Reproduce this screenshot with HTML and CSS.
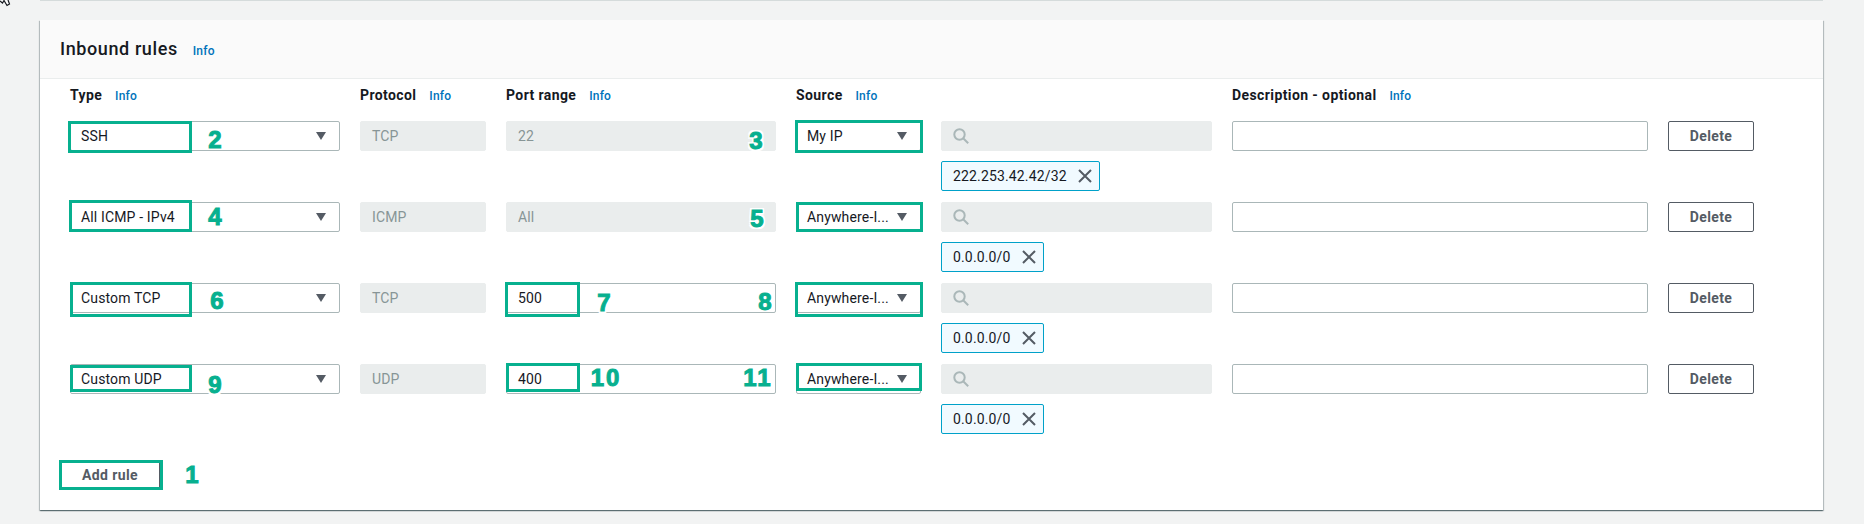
FILE: index.html
```html
<!DOCTYPE html>
<html lang="en">

<head>
    <meta charset="UTF-8">
    <title>Inbound rules</title>
    <link rel="stylesheet" href="styles.css">
</head>

<body>
    <div class="top-rule"></div>

    <section class="card">
        <header class="card-header">
            <h2>Inbound rules</h2>
            <a class="info info-title" href="#">Info</a>
        </header>

        <div class="rules">
            <div class="rule-row label-row">
                <div class="label">Type <a class="info" href="#">Info</a></div>
                <div class="label">Protocol <a class="info" href="#">Info</a></div>
                <div class="label">Port range <a class="info" href="#">Info</a></div>
                <div class="label label-wide">Source <a class="info" href="#">Info</a></div>
                <div></div>
                <div class="label">Description - optional <a class="info" href="#">Info</a></div>
                <div></div>
            </div>

            <div class="rule-row">
                <div class="select"><span class="select-text">SSH</span><i class="caret"></i></div>
                <div class="field disabled">TCP</div>
                <div class="field disabled">22</div>
                <div class="select"><span class="select-text">My IP</span><i class="caret"></i></div>
                <div class="source">
                    <div class="field disabled search">
                        <svg width="16" height="16" viewBox="0 0 16 16" fill="none" stroke="#aab7b8" stroke-width="2"><circle cx="6.5" cy="6.5" r="5.2"/><path d="M10.2 10.2l5 5"/></svg>
                    </div>
                    <div class="chip">222.253.42.42/32
                        <svg width="14" height="14" viewBox="0 0 14 14" fill="none" stroke="#545b64" stroke-width="2"><path d="M1 1l12 12M13 1L1 13"/></svg>
                    </div>
                </div>
                <div class="field"></div>
                <button class="button">Delete</button>
            </div>

            <div class="rule-row">
                <div class="select"><span class="select-text">All ICMP - IPv4</span><i class="caret"></i></div>
                <div class="field disabled">ICMP</div>
                <div class="field disabled">All</div>
                <div class="select"><span class="select-text">Anywhere-I...</span><i class="caret"></i></div>
                <div class="source">
                    <div class="field disabled search">
                        <svg width="16" height="16" viewBox="0 0 16 16" fill="none" stroke="#aab7b8" stroke-width="2"><circle cx="6.5" cy="6.5" r="5.2"/><path d="M10.2 10.2l5 5"/></svg>
                    </div>
                    <div class="chip">0.0.0.0/0
                        <svg width="14" height="14" viewBox="0 0 14 14" fill="none" stroke="#545b64" stroke-width="2"><path d="M1 1l12 12M13 1L1 13"/></svg>
                    </div>
                </div>
                <div class="field"></div>
                <button class="button">Delete</button>
            </div>

            <div class="rule-row">
                <div class="select"><span class="select-text">Custom TCP</span><i class="caret"></i></div>
                <div class="field disabled">TCP</div>
                <div class="field">500</div>
                <div class="select"><span class="select-text">Anywhere-I...</span><i class="caret"></i></div>
                <div class="source">
                    <div class="field disabled search">
                        <svg width="16" height="16" viewBox="0 0 16 16" fill="none" stroke="#aab7b8" stroke-width="2"><circle cx="6.5" cy="6.5" r="5.2"/><path d="M10.2 10.2l5 5"/></svg>
                    </div>
                    <div class="chip">0.0.0.0/0
                        <svg width="14" height="14" viewBox="0 0 14 14" fill="none" stroke="#545b64" stroke-width="2"><path d="M1 1l12 12M13 1L1 13"/></svg>
                    </div>
                </div>
                <div class="field"></div>
                <button class="button">Delete</button>
            </div>

            <div class="rule-row">
                <div class="select"><span class="select-text">Custom UDP</span><i class="caret"></i></div>
                <div class="field disabled">UDP</div>
                <div class="field">400</div>
                <div class="select"><span class="select-text">Anywhere-I...</span><i class="caret"></i></div>
                <div class="source">
                    <div class="field disabled search">
                        <svg width="16" height="16" viewBox="0 0 16 16" fill="none" stroke="#aab7b8" stroke-width="2"><circle cx="6.5" cy="6.5" r="5.2"/><path d="M10.2 10.2l5 5"/></svg>
                    </div>
                    <div class="chip">0.0.0.0/0
                        <svg width="14" height="14" viewBox="0 0 14 14" fill="none" stroke="#545b64" stroke-width="2"><path d="M1 1l12 12M13 1L1 13"/></svg>
                    </div>
                </div>
                <div class="field"></div>
                <button class="button">Delete</button>
            </div>

            <button class="button add-rule">Add rule</button>
        </div>
    </section>

    <!-- Green tutorial annotations drawn over the screenshot -->
    <div class="box box-ssh"></div>
    <div class="box box-icmp"></div>
    <div class="box box-tcp"></div>
    <div class="box box-udp"></div>
    <div class="box box-500"></div>
    <div class="box box-400"></div>
    <div class="box box-myip"></div>
    <div class="box box-any1"></div>
    <div class="box box-any2"></div>
    <div class="box box-any3"></div>
    <div class="box box-add"></div>

    <span class="num num-1">1</span>
    <span class="num num-2">2</span>
    <span class="num num-3">3</span>
    <span class="num num-4">4</span>
    <span class="num num-5">5</span>
    <span class="num num-6">6</span>
    <span class="num num-7">7</span>
    <span class="num num-8">8</span>
    <span class="num num-9">9</span>
    <span class="num num-10">10</span>
    <span class="num num-11">11</span>

    <svg class="cursor" width="12" height="7" viewBox="0 0 12 7" fill="#fff" stroke="#16191f" stroke-width="1.2"><path d="M0 1l2.5 2L4 0.5 7 5.5 9.5 4 8 0"/></svg>
</body>

</html>
```

FILE: styles.css
```css
body {
    font-family: Roboto, "Liberation Sans", sans-serif;
    font-size: 14px;
    letter-spacing: 0.15px;
    color: #16191f;
    margin: 0;
    padding: 0;
    background-color: #f2f3f3;
    position: relative;
    height: 524px;
    overflow: hidden;
}

.top-rule {
    width: 1783px;
    height: 1px;
    margin: 0 0 19px 40px;
    background-color: #d5dbdb;
}

.card {
    width: 1783px;
    height: 490px;
    margin-left: 40px;
    background-color: white;
    box-shadow: 0 1px 1px 0 rgba(0, 28, 36, 0.4), 1px 1px 1px 0 rgba(0, 28, 36, 0.2), -1px 1px 1px 0 rgba(0, 28, 36, 0.2);
}

.card-header {
    height: 59px;
    box-sizing: border-box;
    padding: 0 20px;
    display: flex;
    align-items: center;
    background-color: #fafafa;
    border-bottom: 1px solid #eaeded;
}

.card-header h2 {
    margin: 0 0 2px;
    font-size: 18px;
    font-weight: 500;
    letter-spacing: 0.6px;
}

.info {
    font-size: 12px;
    font-weight: 500;
    letter-spacing: 0.2px;
    color: #0073bb;
    text-decoration: none;
    margin-left: 9px;
}

.info-title {
    margin-left: 15px;
    margin-top: 3px;
}

.rules {
    padding: 0 30px;
}

.rule-row {
    display: grid;
    grid-template-columns: 270px 126px 270px 125px 271px 416px 86px;
    column-gap: 20px;
    padding-bottom: 11px;
}

.label-row {
    height: 42px;
    box-sizing: border-box;
    padding: 7px 0 0;
    align-items: start;
}

.label {
    font-weight: 700;
    line-height: 18px;
    letter-spacing: 0.4px;
    white-space: nowrap;
}

.select,
.field,
.chip {
    height: 30px;
    box-sizing: border-box;
    display: flex;
    align-items: center;
    border-radius: 2px;
}

.select {
    padding: 0 13px 0 10px;
    gap: 2px;
    background-color: white;
    border: 1px solid #aab7b8;
}

.select-text {
    flex: 1;
    min-width: 0;
    white-space: nowrap;
}

.caret {
    flex: none;
    width: 0;
    height: 0;
    border-left: 5px solid transparent;
    border-right: 5px solid transparent;
    border-top: 8px solid #545b64;
}

.field {
    padding: 0 11px;
    background-color: white;
    border: 1px solid #aab7b8;
}

.field.disabled {
    background-color: #eaeded;
    border-color: #eaeded;
    color: #879596;
}

.source {
    display: flex;
    flex-direction: column;
    align-items: flex-start;
    gap: 10px;
}

.search {
    width: 100%;
}

.chip {
    gap: 11px;
    padding: 0 7px 0 11px;
    background-color: #f1faff;
    border: 1px solid #00a1c9;
}

.button {
    height: 30px;
    padding: 0 20px;
    background-color: white;
    border: 1px solid #545b64;
    border-radius: 2px;
    font-family: inherit;
    font-size: 14px;
    font-weight: 700;
    letter-spacing: 0.4px;
    color: #545b64;
}

.add-rule {
    width: 100px;
    padding: 0;
    margin: 15px 0 0 -10px;
    display: block;
}

/* annotations */
.box {
    position: absolute;
    box-sizing: border-box;
    border: 3px solid #07b08f;
}

.box-ssh { left: 68px; top: 121px; width: 124px; height: 32px; }
.box-icmp { left: 69px; top: 200px; width: 123px; height: 32px; }
.box-tcp { left: 70px; top: 282px; width: 122px; height: 35px; }
.box-udp { left: 70px; top: 365px; width: 122px; height: 27px; }
.box-500 { left: 505px; top: 282px; width: 75px; height: 35px; }
.box-400 { left: 506px; top: 363px; width: 74px; height: 29px; }
.box-myip { left: 795px; top: 120px; width: 128px; height: 33px; }
.box-any1 { left: 796px; top: 202px; width: 127px; height: 30px; }
.box-any2 { left: 795px; top: 282px; width: 128px; height: 35px; }
.box-any3 { left: 796px; top: 363px; width: 126px; height: 28px; }
.box-add { left: 59px; top: 460px; width: 104px; height: 30px; }

.num {
    position: absolute;
    transform: translate(-50%, -50%);
    font-family: "Liberation Sans", sans-serif;
    font-size: 24px;
    font-weight: 700;
    line-height: 1;
    letter-spacing: 2px;
    color: #07b08f;
    -webkit-text-stroke: 1px #07b08f;
    text-shadow: 2px 0 #fff, -2px 0 #fff, 0 2px #fff, 0 -2px #fff, 2px 2px #fff, -2px -2px #fff, 2px -2px #fff, -2px 2px #fff;
}

.num-1 { left: 193px; top: 475px; text-shadow: none; }
.num-2 { left: 216px; top: 140px; }
.num-3 { left: 757px; top: 141px; }
.num-4 { left: 216px; top: 217px; }
.num-5 { left: 758px; top: 219px; }
.num-6 { left: 218px; top: 301px; }
.num-7 { left: 605px; top: 303px; }
.num-8 { left: 766px; top: 302px; }
.num-9 { left: 216px; top: 385px; }
.num-10 { left: 606px; top: 378px; text-shadow: none; }
.num-11 { left: 758px; top: 378px; text-shadow: none; }

.cursor {
    position: absolute;
    left: 0;
    top: 0;
}
```
